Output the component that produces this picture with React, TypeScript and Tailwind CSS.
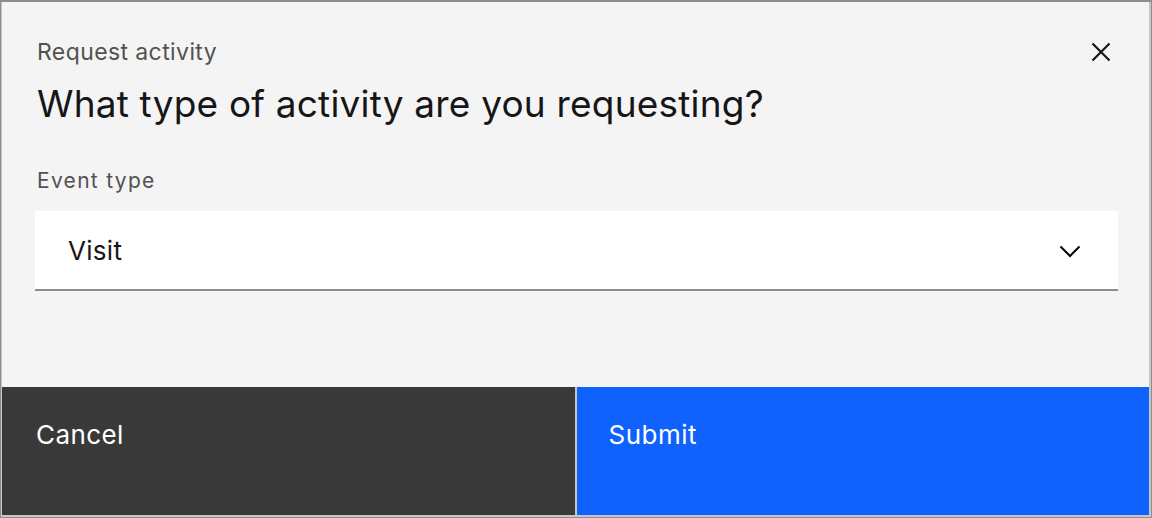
function CloseIcon() {
  return (
    <svg width="20" height="20" viewBox="0 0 20 20" fill="none" stroke="currentColor" strokeWidth="2.2">
      <path d="M1.5 1.5 L18.5 18.5 M18.5 1.5 L1.5 18.5" />
    </svg>
  );
}

function Chevron() {
  return (
    <svg width="22" height="13" viewBox="0 0 22 13" fill="none" stroke="currentColor" strokeWidth="2">
      <path d="M1.5 1.5 L11 11 L20.5 1.5" />
    </svg>
  );
}

export default function App() {
  return (
    <div
      className="w-[1152px] h-[518px] overflow-hidden bg-[#8d8d8d] pt-[2px] px-[1px] pb-[1px]"
      style={{ fontFamily: "Inter, 'Liberation Sans', sans-serif" }}
    >
      <div className="flex h-full flex-col border-l border-r-2 border-b-2 border-[#c6c6c6] bg-[#f4f4f4]">
        <div className="h-[385px] pl-[33px] pr-[31px] pt-[36px]">
          <div className="flex items-start justify-between">
            <div className="pl-[2px]">
              <p className="text-[23px] leading-[28px] tracking-[0.4px] text-[#525252]">Request activity</p>
              <h2 className="mt-[14px] text-[37px] leading-[48px] tracking-[0.2px] text-[#161616]">
                What type of activity are you requesting?
              </h2>
            </div>
            <button className="mr-[3px] flex h-[28px] w-[28px] items-center justify-center text-[#161616]">
              <CloseIcon />
            </button>
          </div>

          <label className="mt-[41px] block pl-[2px] text-[21px] leading-[24px] tracking-[1.3px] text-[#525252]">
            Event type
          </label>
          <div className="mt-[18px] flex h-[80px] items-center justify-between border-b-2 border-[#8d8d8d] bg-white pl-[33px] pr-[37px] pt-[2px]">
            <span className="text-[26px] leading-[32px] tracking-[0.3px] text-[#161616]">Visit</span>
            <Chevron />
          </div>
        </div>

        <div className="grid h-[128px] grid-cols-2 gap-[2px] bg-[#c6c6c6]">
          <button className="flex items-start bg-[#393939] pl-[34px] pt-[32px] text-left text-[26px] leading-[32px] tracking-[0.4px] text-white">
            Cancel
          </button>
          <button className="flex items-start bg-[#0f62fe] pl-[32px] pt-[32px] text-left text-[26px] leading-[32px] tracking-[0.5px] text-white">
            Submit
          </button>
        </div>
      </div>
    </div>
  );
}
